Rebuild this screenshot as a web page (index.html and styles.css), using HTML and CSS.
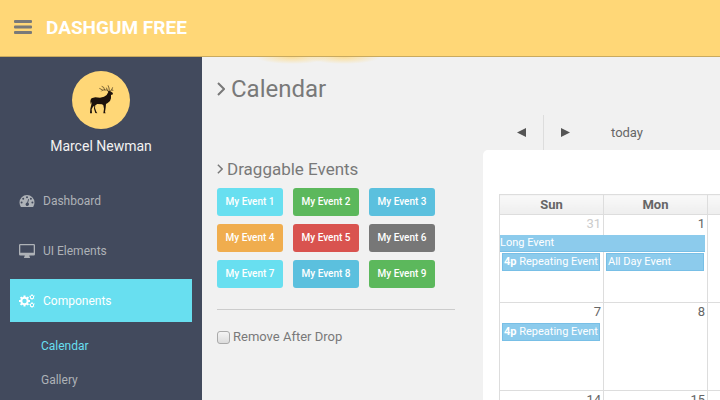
FILE: index.html
```html
<!DOCTYPE html>
<html lang="en">
<head>
<meta charset="utf-8">
<title>Dashgum Free</title>
<link rel="stylesheet" href="styles.css">
</head>
<body>
<header class="topbar">
  <button class="menu-toggle" type="button" aria-label="Toggle navigation">
    <svg width="18" height="14" viewBox="0 0 18 14"><path d="M1 0h16q1 0 1 1v1q0 1-1 1H1q-1 0-1-1V1q0-1 1-1zM1 5.5h16q1 0 1 1v1q0 1-1 1H1q-1 0-1-1v-1q0-1 1-1zM1 11h16q1 0 1 1v1q0 1-1 1H1q-1 0-1-1v-1q0-1 1-1z"/></svg>
  </button>
  <a class="brand" href="#">DASHGUM FREE</a>
</header>
<div class="shell">
  <aside class="sidebar">
    <a class="avatar" href="#" aria-label="Profile">
      <svg viewBox="36 33 174 174"><path class="deer" d="M97 114L106 112 120 113 132 110 140 105 145 96 143 92 150 93 158 98 159 103 153 105 153 115 150 123 143 129 138 132 137 143 135 156 137 160 130 160 132 146 130 136 126 133 112 132 106 136 105 144 109 155 112 160 106 159 102 146 103 137 99 140 95 148 96 160 90 160 91 146 94 134 95 125 92 132 91 123 93 116Z"/><path class="antlers" d="M146 95L140 90 128 90 118 85M128 90L124 94M134 90L131 82 125 79M143 92L139 83M148 94L147 84 144 76M149 94L155 90 158 82M154 90L160 91"/></svg>
    </a>
    <h5 class="user">Marcel Newman</h5>
    <nav class="nav">
      <a class="nav-item" href="#">
        <svg class="icon" viewBox="0 0 16 14"><path fill-rule="evenodd" d="M8 1a7.500 7.500 0 0 0-7.500 7.500c0 1.500.4 2.800 1.100 4q.3.500.8.500h11.200q.5 0 .8-.5c.7-1.200 1.100-2.500 1.100-4A7.500 7.500 0 0 0 8 1zM8 2.200a1 1 0 1 1 0 2 1 1 0 0 1 0-2zM4.200 3.800a1 1 0 1 1 0 2 1 1 0 0 1 0-2zM11.900 3.800a1 1 0 1 1 0 2 1 1 0 0 1 0-2zM2.600 7.600a1 1 0 1 1 0 2 1 1 0 0 1 0-2zM13.400 7.600a1 1 0 1 1 0 2 1 1 0 0 1 0-2zM9.200 5l.8.2-.9 3.600a1.700 1.700 0 1 1-.9-.2z"/></svg>
        <span>Dashboard</span>
      </a>
      <a class="nav-item" href="#">
        <svg class="icon" viewBox="0 0 16 14"><path fill-rule="evenodd" d="M1.300 0h13.400Q16 0 16 1.300v8.900q0 1.300-1.300 1.300H10.200l.5 1.500q.3 0 .3.400v.6H5v-.6q0-.4.300-.4l.5-1.500H1.300Q0 11.500 0 10.200V1.300Q0 0 1.300 0zM1.300 1.200v7.600h13.400V1.200z"/></svg>
        <span>UI Elements</span>
      </a>
      <a class="nav-item active" href="#">
        <svg class="icon gears" viewBox="0 0 16 14"><circle cx="5.500" cy="7" r="3.200"/><path d="M5.500 1.500v2M5.500 10.500v2M0 7h2M9 7h2M1.600 3.100L3 4.500M8 9.500l1.400 1.400M1.600 10.900L3 9.500M8 4.500l1.400-1.400"/><g class="small-gear"><circle cx="13" cy="3" r="1.700"/><circle cx="13" cy="11" r="1.700"/><path d="M13 .2v1M13 4.800v1M10.400 2.300l1 .2M14.600 2.300l1-.4M11 4.800l.8-.7M14.300 4.200l.9.600M13 8.200v1M13 12.800v1M10.400 10.500l1 .2M14.600 10.300l1-.4M11 12.800l.8-.7M14.300 12.200l.9.600"/></g></svg>
        <span>Components</span>
      </a>
      <div class="subnav">
        <a class="current" href="#">Calendar</a>
        <a href="#">Gallery</a>
      </div>
    </nav>
  </aside>
  <main class="main">
    <h1 class="page-title"><svg class="chevron" viewBox="0 0 8 14"><path d="M1 1l6 6-6 6"/></svg>Calendar</h1>
    <div class="columns">
      <section class="draggable">
        <h2 class="section-title"><svg class="chevron" viewBox="0 0 8 14"><path d="M1 1l6 6-6 6"/></svg>Draggable Events</h2>
        <div class="labels">
          <div class="label theme" draggable="true">My Event 1</div>
          <div class="label success" draggable="true">My Event 2</div>
          <div class="label info" draggable="true">My Event 3</div>
          <div class="label warning" draggable="true">My Event 4</div>
          <div class="label danger" draggable="true">My Event 5</div>
          <div class="label default" draggable="true">My Event 6</div>
          <div class="label theme" draggable="true">My Event 7</div>
          <div class="label info" draggable="true">My Event 8</div>
          <div class="label success" draggable="true">My Event 9</div>
        </div>
        <label class="remove"><input type="checkbox"><span>Remove After Drop</span></label>
      </section>
      <section class="calendar">
        <div class="toolbar">
          <button class="prev" type="button" aria-label="Previous"><svg width="9" height="9" viewBox="0 0 9 9"><path d="M9 0v9L0 4.500z"/></svg></button>
          <button class="next" type="button" aria-label="Next"><svg width="9" height="9" viewBox="0 0 9 9"><path d="M0 0v9l9-4.500z"/></svg></button>
          <button class="today" type="button">today</button>
        </div>
        <div class="panel">
          <table class="month">
            <thead><tr><th>Sun</th><th>Mon</th><th></th></tr></thead>
            <tbody>
              <tr>
                <td><div class="date other">31</div><div class="event long">Long Event</div><div class="event"><b>4p</b> Repeating Event</div></td>
                <td><div class="date">1</div><div class="event below">All Day Event</div></td>
                <td></td>
              </tr>
              <tr>
                <td><div class="date">7</div><div class="event"><b>4p</b> Repeating Event</div></td>
                <td><div class="date">8</div></td>
                <td></td>
              </tr>
              <tr>
                <td><div class="date">14</div></td>
                <td><div class="date">15</div></td>
                <td></td>
              </tr>
            </tbody>
          </table>
        </div>
      </section>
    </div>
  </main>
</div>
</body>
</html>
```
FILE: styles.css
```css
* { box-sizing: border-box; }

body {
  margin: 0;
  height: 100vh;
  overflow: hidden;
  display: flex;
  flex-direction: column;
  background: #f1f1f1;
  color: #797979;
  font-family: Roboto, "Liberation Sans", sans-serif;
  font-size: 13px;
}

a { color: inherit; text-decoration: none; }
button { border: 0; padding: 0; background: none; font: inherit; color: inherit; }
svg { display: block; }
h1, h2, h5 { margin: 0; font-weight: 400; }

.topbar {
  flex: none;
  display: flex;
  align-items: center;
  gap: 14px;
  height: 57px;
  padding: 0 14px 2px;
  background: #ffd777;
  border-bottom: 1px solid #c9aa5f;
}
.menu-toggle { fill: #797979; }
.brand { color: #fff; font-size: 19px; font-weight: 700; }

.shell { flex: 1; display: flex; min-height: 0; }

.sidebar {
  flex: none;
  width: 202px;
  padding: 14px 10px 0;
  background: #424a5d;
}
.avatar {
  display: block;
  width: 58px;
  height: 58px;
  margin: 0 auto;
  border-radius: 50%;
  background: #ffd777;
}
.deer { fill: #1d120c; }
.antlers { fill: none; stroke: #3b2c16; stroke-width: 2; }
.user { margin: 8px 0 24px; color: #f2f2f2; font-size: 14px; line-height: 18px; text-align: center; }

.nav { display: flex; flex-direction: column; gap: 7px; color: #aeb2b7; font-size: 12px; }
.nav-item { display: flex; align-items: center; gap: 8px; height: 43px; padding: 0 9px; }
.icon { width: 16px; height: 14px; fill: currentColor; }
.nav-item.active { background: #68dff0; color: #fff; }
.nav-item .gears { fill: none; stroke: currentColor; stroke-width: 2; }
.small-gear { stroke-width: 1; }
.subnav { padding-left: 31px; line-height: 34px; }
.subnav a { display: block; }
.subnav .current { color: #68dff0; }

.main {
  flex: 1;
  min-width: 0;
  padding: 18px 0 0 15px;
  background:
    radial-gradient(ellipse 36px 7px at 90px 0, #ffd777bb, #ffd77700) no-repeat,
    radial-gradient(ellipse 36px 7px at 142px 0, #ffd777bb, #ffd77700) no-repeat,
    #f1f1f1;
}
.chevron { width: 8px; height: 14px; fill: none; stroke: currentColor; stroke-width: 2; }
.page-title { display: flex; align-items: center; gap: 6px; font-size: 24px; line-height: 28px; }
.section-title { display: flex; align-items: center; gap: 4px; margin-bottom: 8px; font-size: 17px; line-height: 22px; }
.section-title .chevron { width: 6px; height: 10px; }

.columns { display: grid; grid-template-columns: 238px 1fr; gap: 28px; margin-top: 12px; }
.draggable { padding-top: 43px; }
.labels {
  display: grid;
  grid-template-columns: repeat(3, 66px);
  gap: 8px 10px;
  padding-bottom: 21px;
  border-bottom: 1px solid #ccc;
}
.label {
  height: 28px;
  border-radius: 3px;
  color: #fff;
  font-size: 10px;
  font-weight: 500;
  line-height: 28px;
  text-align: center;
}
.theme { background: #68dff0; }
.success { background: #5cb85c; }
.info { background: #5bc0de; }
.warning { background: #f0ad4e; }
.danger { background: #d9534f; }
.default { background: #777; }

.remove { display: flex; align-items: center; gap: 3px; margin-top: 18px; line-height: 18px; }
.remove input {
  appearance: none;
  width: 13px;
  height: 13px;
  margin: 0;
  border: 1px solid #aaa;
  border-radius: 3px;
  background: linear-gradient(#f4f4f4, #dcdcdc);
}

.calendar { min-width: 0; }
.toolbar { display: flex; height: 35px; padding-left: 16px; color: #666; fill: #555; }
.toolbar button { display: grid; place-items: center; }
.prev, .next { width: 44px; }
.toolbar .next { border-left: 1px solid #ddd; }
.today { width: 80px; }

.panel { overflow: hidden; padding: 44px 0 0 16px; border-radius: 5px 0 0; background: #fff; }
.month { table-layout: fixed; width: 313px; border-collapse: collapse; color: #666; }
.month th, .month td { padding: 0; border: 1px solid #ddd; }
.month th { height: 20px; background: linear-gradient(#f9f9f9, #eee); font-weight: 700; line-height: 18px; }
.month td { height: 88px; vertical-align: top; }
.date { height: 20px; padding-right: 2px; line-height: 18px; text-align: right; }
.date.other { color: #ccc; }
.event {
  height: 18px;
  margin: 0 3px 0 2px;
  padding-left: 1px;
  border: 1px solid #78bfe6;
  background: #8ccbec;
  color: #fff;
  font-size: 11px;
  line-height: 16px;
  white-space: nowrap;
}
.event.long { position: relative; width: 205px; height: 17px; margin: 0 0 1px; padding: 0; border-width: 0 0 1px; }
.event.below { margin-top: 18px; }
```
